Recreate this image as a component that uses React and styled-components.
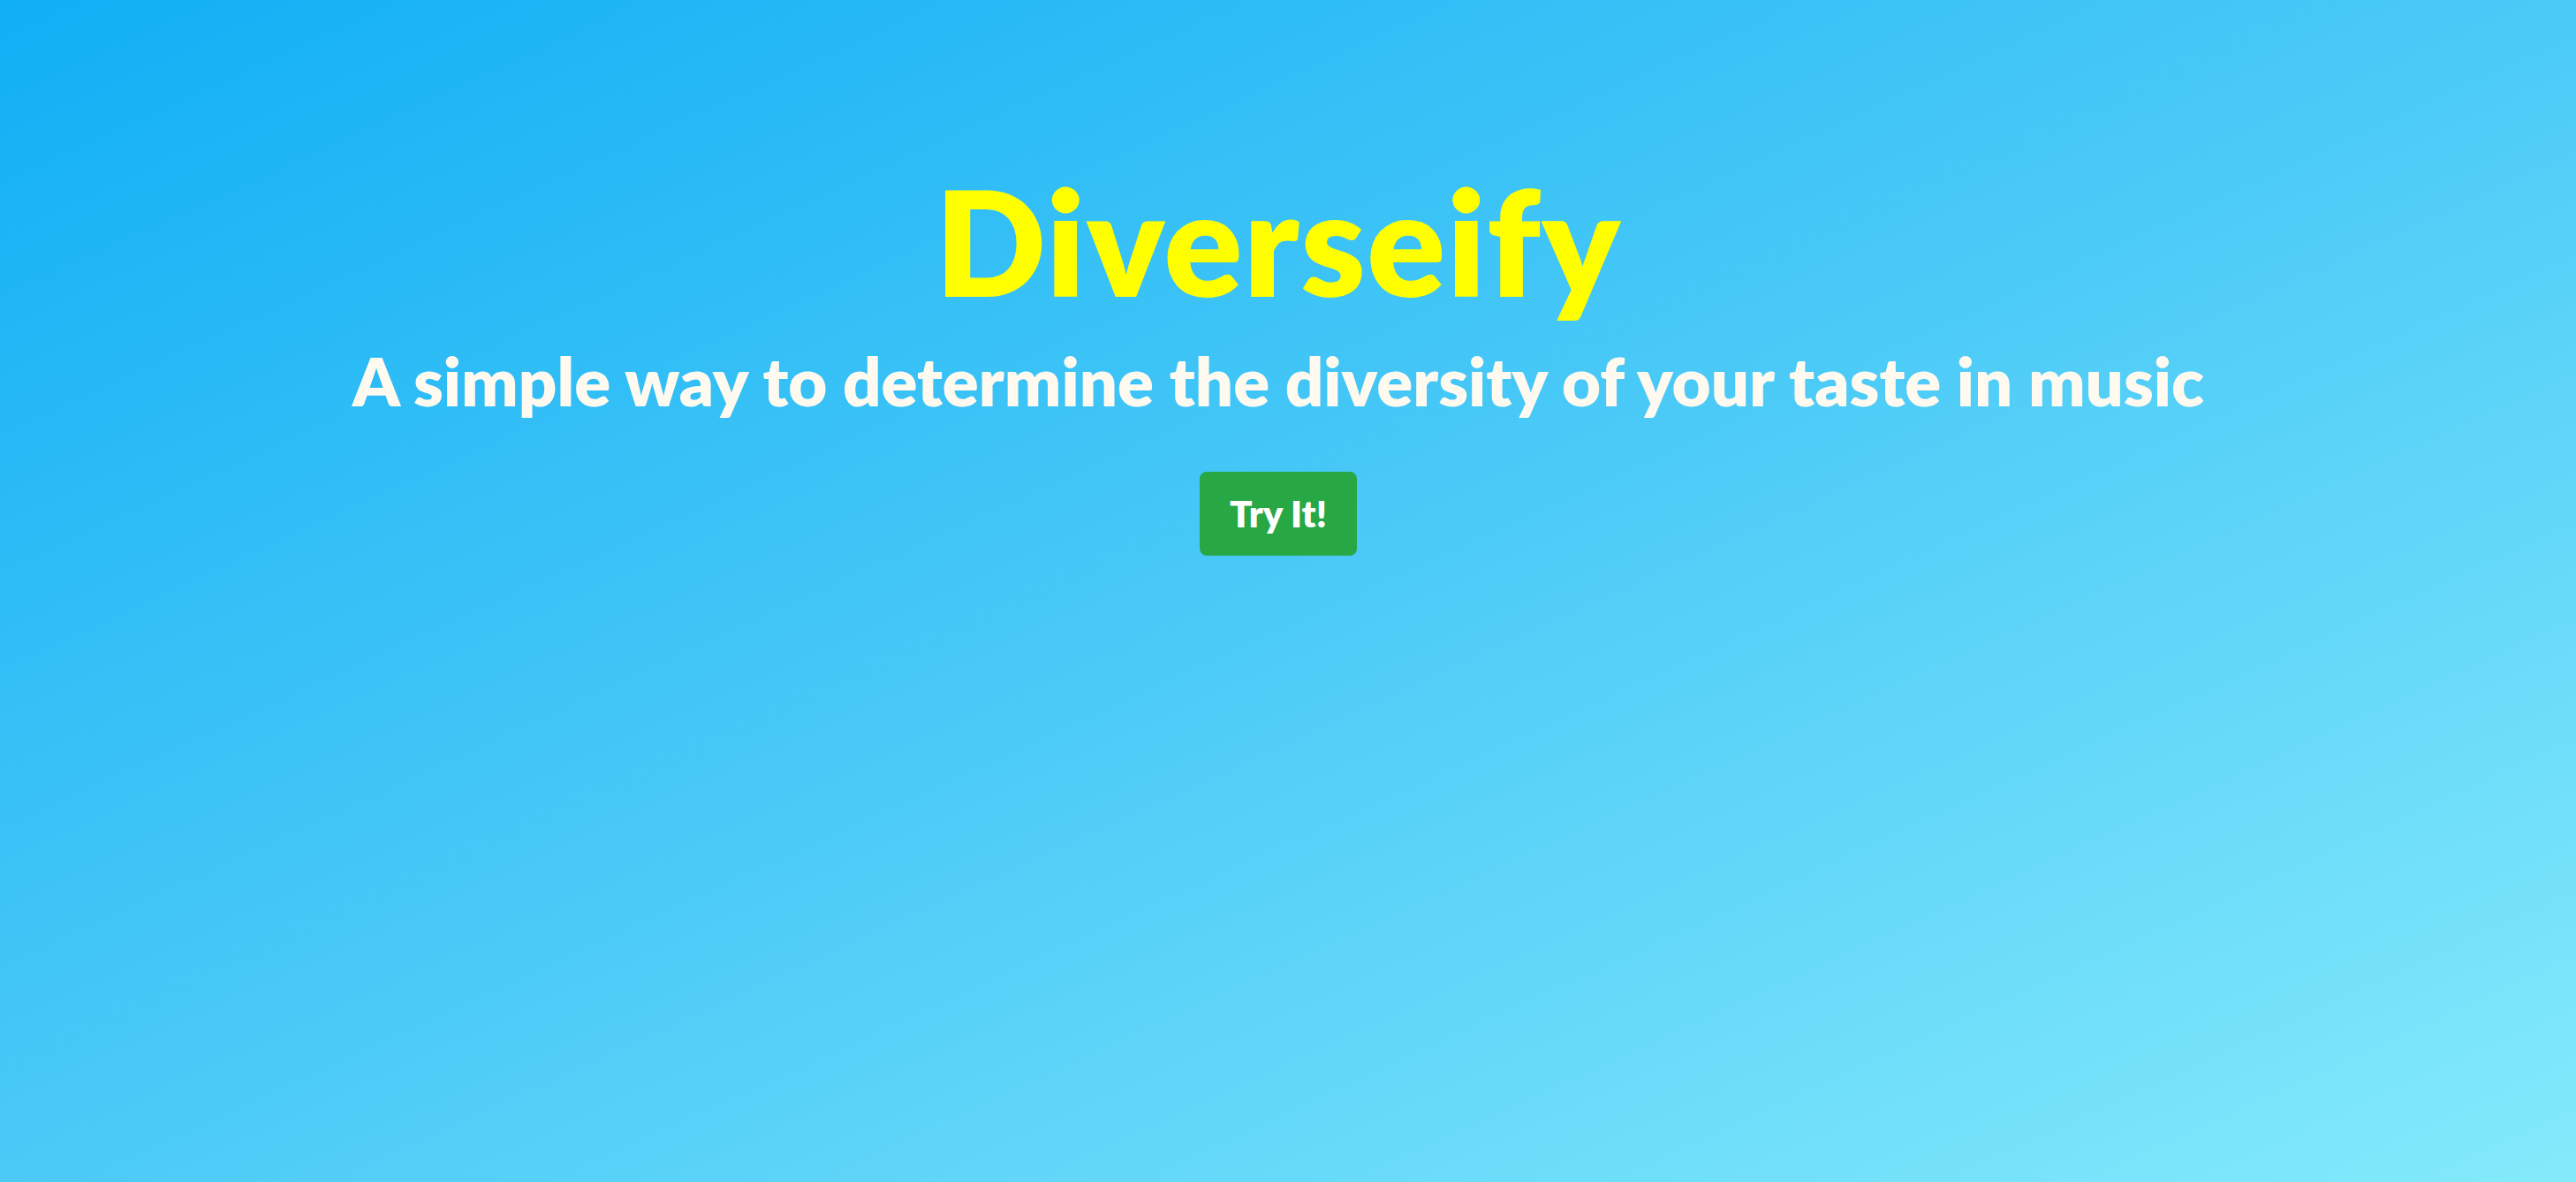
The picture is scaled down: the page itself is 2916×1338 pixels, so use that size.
import React from "react";
import styled, { createGlobalStyle } from "styled-components";

const GlobalStyle = createGlobalStyle`
  html, body {
    margin: 0;
    padding: 0;
  }
  body {
    font-family: Lato, "Noto Sans", sans-serif;
  }
`;

const App = () => {
  return (
    <>
      <GlobalStyle />
      <StyledPage>
        <StyledTitle>Diverseify</StyledTitle>
        <StyledSubtitle>
          A simple way to determine the diversity of your taste in music
        </StyledSubtitle>
        <StyledButton type="button">Try It!</StyledButton>
      </StyledPage>
    </>
  );
};

const StyledPage = styled.main`
  min-height: 100vh;
  box-sizing: border-box;
  display: flex;
  flex-direction: column;
  align-items: center;
  padding: 173px 22px 0 0;
  background: linear-gradient(to bottom right, #11aff5 0%, #4bcaf7 50%, #84eafb 100%);
`;

const StyledTitle = styled.h1`
  margin: 0;
  font-size: 165px;
  font-weight: 800;
  line-height: 1.2;
  letter-spacing: 1.5px;
  color: #ffff00;
`;

const StyledSubtitle = styled.h2`
  margin: 14px 0 0;
  font-size: 76px;
  font-weight: 800;
  line-height: 1.2;
  color: #fffaf0;
`;

const StyledButton = styled.button`
  margin-top: 58px;
  font-family: inherit;
  font-size: 42px;
  font-weight: 800;
  line-height: 1.2;
  color: #ffffff;
  background-color: #28a745;
  border: none;
  border-radius: 8px;
  padding: 22px 34px;
  cursor: pointer;
`;

export default App;
